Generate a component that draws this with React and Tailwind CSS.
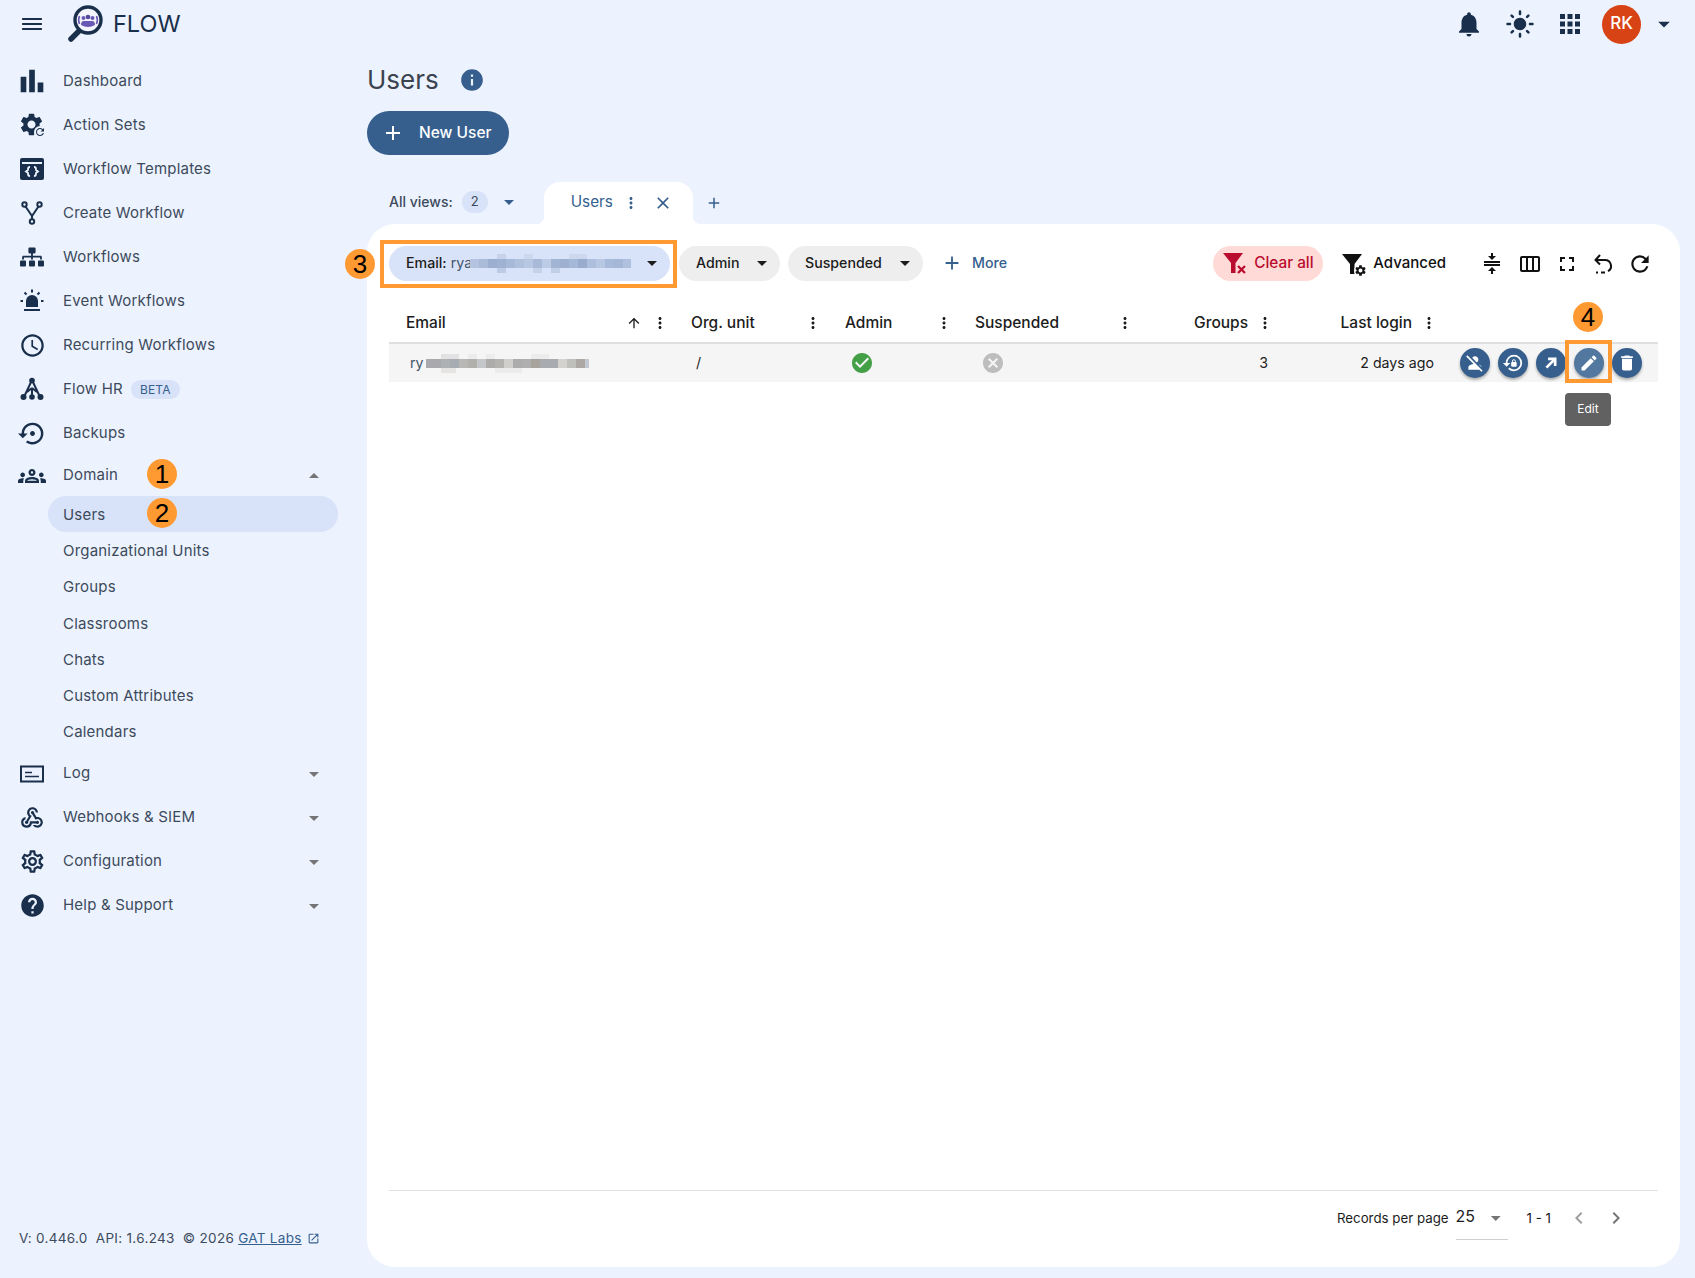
import React from 'react';
import {
  MdMenu, MdBarChart, MdSettings, MdRefresh, MdAccessTime, MdSettingsBackupRestore, MdOutlineGroups, MdWebhook,
  MdOutlineSettings, MdHelp, MdNotifications, MdLightMode, MdApps, MdInfo, MdAdd, MdMoreVert, MdClose,
  MdArrowDropDown, MdArrowDropUp, MdArrowUpward, MdCheckCircle, MdCancel, MdPersonOff, MdLockReset,
  MdEdit, MdDelete, MdCompress, MdOutlineViewWeek, MdFullscreen,
  MdChevronLeft, MdChevronRight, MdOpenInNew,
} from 'react-icons/md';
import { FaSitemap } from 'react-icons/fa';

const Logo = () => (
  <svg viewBox="0 0 36 38" className="w-[36px] h-[38px]">
    <path d="M13 25 L4 34" stroke="#1a2f4b" strokeWidth="5.5" strokeLinecap="round" />
    <circle cx="21" cy="15" r="13" fill="#f4f4fb" stroke="#1a2f4b" strokeWidth="3.4" />
    <path d="M12.5 11 A10 10 0 0 0 12.5 19 M29.500 11 A10 10 0 0 1 29.500 19" fill="none" stroke="#6a58b5" strokeWidth="1.6" />
    <circle cx="16.500" cy="13" r="2" fill="#6a58b5" />
    <circle cx="25.500" cy="13" r="2" fill="#6a58b5" />
    <circle cx="21" cy="12" r="2.300" fill="#5246a0" />
    <path d="M14 20 q0-4 3-4 h8 q3 0 3 4 q-7 4-14 0z" fill="#6a58b5" />
  </svg>
);

const ActionSetsIcon = () => (
  <div className="relative w-6 h-6">
    <MdSettings className="w-[27px] h-[27px] -ml-0.5 -mt-0.5 text-[#1a2f4b]" />
    <div className="absolute right-[-2px] bottom-[-1px] w-3 h-3 rounded-full bg-[#ecf3fe] flex items-center justify-center">
      <MdRefresh className="w-3 h-3 text-[#1a2f4b]" />
    </div>
  </div>
);

const TemplatesIcon = () => (
  <svg viewBox="0 0 24 24" className="w-6 h-6">
    <rect x="0" y="1" width="24" height="22" rx="2" fill="#1a2f4b" />
    <rect x="2" y="5" width="20" height="2" fill="#ecf3fe" />
    <path d="M10 10 q-2 0-2 2 v1 l-2 1.500 2 1.500 v1 q0 2 2 2 M14 10 q2 0 2 2 v1 l2 1.500 -2 1.500 v1 q0 2-2 2" fill="none" stroke="#ecf3fe" strokeWidth="1.800" />
  </svg>
);

const ForkIcon = () => (
  <svg viewBox="0 0 24 24" className="w-6 h-6" fill="none" stroke="#1a2f4b" strokeWidth="2">
    <circle cx="4.500" cy="3.500" r="2.200" />
    <circle cx="19.500" cy="3.500" r="2.200" />
    <circle cx="12" cy="20.500" r="2.200" />
    <path d="M5.500 5.500 L12 15 L18.500 5.500 M12 15 V18.300" />
  </svg>
);

const SirenIcon = () => (
  <svg viewBox="0 0 24 24" className="w-6 h-6">
    <path d="M6 18 V12 a6 6 0 0 1 12 0 V18z" fill="#1a2f4b" />
    <rect x="4" y="20" width="16" height="2" fill="#1a2f4b" />
    <path d="M12 0.500 V3.500 M4.500 3.500 L6.500 5.500 M19.500 3.500 L17.500 5.500 M0.500 12 H3 M21 12 H23.500" stroke="#1a2f4b" strokeWidth="2" />
  </svg>
);

const FlowHrIcon = () => (
  <svg viewBox="0 0 24 24" className="w-6 h-6">
    <path d="M12 3 L4 20 M12 3 L20 20 M12 11 L12 20 M12 11 L7 15 M12 11 L17 15" fill="none" stroke="#1a2f4b" strokeWidth="2" />
    <circle cx="12" cy="3.500" r="2.800" fill="#1a2f4b" />
    <circle cx="3.500" cy="20" r="3" fill="#1a2f4b" />
    <circle cx="20.500" cy="20" r="3" fill="#1a2f4b" />
    <circle cx="12" cy="20" r="2.800" fill="#1a2f4b" />
  </svg>
);

const LogIcon = () => (
  <svg viewBox="0 0 24 24" className="w-6 h-6">
    <rect x="1" y="4.500" width="22" height="15" fill="none" stroke="#1a2f4b" strokeWidth="2" />
    <path d="M5 10.500 H12 M5 14.500 H19" stroke="#1a2f4b" strokeWidth="1.600" />
  </svg>
);

const ResetIcon = () => (
  <svg viewBox="0 0 24 24" className="w-6 h-6" fill="none" stroke="#111" strokeWidth="2">
    <path d="M9 3 L4.500 8 L9 12.500" />
    <path d="M4.500 8 H14 a6 6 0 0 1 3 11.200" />
    <path d="M14 20.500 H10 M7 20.500 H5" />
  </svg>
);

const OutwardIcon = () => (
  <svg viewBox="0 0 24 24" className="w-5 h-5" fill="none" stroke="#fff" strokeWidth="3.200">
    <path d="M6.500 17.500 L16 8" />
    <path d="M8.500 7 H17 V15.500" />
  </svg>
);

const ClearFilterIcon = () => (
  <svg viewBox="0 0 26 24" className="w-[26px] h-6">
    <path d="M1 2 H21 L13.500 12 V22 H9 V12z" fill="#ba0c2f" />
    <path d="M16 15 L23 22 M23 15 L16 22" stroke="#ba0c2f" strokeWidth="2.300" />
  </svg>
);

const AdvancedFilterIcon = () => (
  <div className="relative w-[26px] h-6">
    <svg viewBox="0 0 26 24" className="w-[26px] h-6">
      <path d="M1 2 H21 L13.500 12 V22 H9 V12z" fill="#111" />
    </svg>
    <MdSettings className="absolute right-0 bottom-[-1px] w-[13px] h-[13px] text-[#111] bg-white rounded-full" />
  </div>
);

const chipBlur = [
  [0, 5, 9, '#b4c4e0'], [9, 5, 9, '#a9bbd9'], [18, 5, 9, '#9dafd0'], [27, 5, 9, '#9fb2d2'], [36, 5, 9, '#a6b9d9'], [45, 5, 9, '#b0c1de'],
  [54, 5, 9, '#b8c8e3'], [63, 5, 9, '#a8bad8'], [72, 5, 9, '#bccbe6'], [81, 5, 9, '#a2b4d3'], [90, 5, 9, '#9eafcf'], [99, 5, 9, '#a5b8d8'],
  [108, 5, 9, '#9aacce'], [117, 5, 9, '#adbfdc'], [126, 5, 9, '#b8c8e3'], [135, 5, 9, '#a8bad9'], [144, 5, 9, '#a5b7d7'], [153, 5, 8, '#b0c1df'],
  [27, 0, 9, '#c5d2ea'], [54, 0, 9, '#ccd8ee'], [99, 0, 18, '#ccd8ee'], [27, 14, 9, '#bccbe6'], [63, 14, 9, '#c5d2ea'], [81, 14, 9, '#c0cee8'],
];

const rowBlur = [
  [0, 5, 15, '#a9a9ad'], [15, 5, 9, '#adb1b3'], [24, 5, 9, '#a6acb1'], [33, 5, 9, '#b8b7b5'], [42, 5, 9, '#b1b0ad'], [51, 5, 9, '#c4c6c9'],
  [60, 5, 9, '#aeacab'], [69, 5, 9, '#b4b3b0'], [78, 5, 9, '#d0cfcb'], [87, 5, 9, '#adacad'], [96, 5, 9, '#b0afb0'], [105, 5, 9, '#a9a39d'],
  [114, 5, 18, '#a8abaf'], [132, 5, 9, '#d3d2ce'], [141, 5, 9, '#bfbfbb'], [150, 5, 9, '#aea8a4'], [159, 5, 9, '#c2c8d2'],
  [15, 0, 18, '#e2e2e2'], [42, 0, 9, '#ececec'], [60, 0, 9, '#ececec'], [105, 0, 18, '#ececec'], [15, 14, 15, '#e6e4e2'], [69, 14, 27, '#ebebeb'],
];

const Mosaic = ({ blocks, className }) => (
  <svg viewBox="0 0 162 22" className={className}>
    {blocks.map(([x, y, w, fill]) => (
      <rect key={`${x}-${y}`} x={x} y={y} width={w} height={y === 5 ? 9 : 5} fill={fill} />
    ))}
  </svg>
);

const Badge = ({ n, className }) => (
  <div className={`absolute w-[30px] h-[30px] rounded-full bg-[#ff9a33] flex items-center justify-center font-['Liberation_Sans',sans-serif] text-[26px] leading-none text-black ${className}`}>
    {n}
  </div>
);

const NavItem = ({ icon, label, caret, children }) => (
  <div className="h-11 flex items-center pl-5 pr-[41px] text-[15px] tracking-[0.2px] text-[#3d4a5c]">
    <div className="w-6 h-6 flex items-center justify-center text-[#1a2f4b] shrink-0 [&>*]:shrink-0">{icon}</div>
    <span className="ml-[19px]">{label}</span>
    {children}
    {caret && <MdArrowDropDown className="w-6 h-6 ml-auto text-[#757575]" />}
  </div>
);

const topNav = [
  { icon: <MdBarChart className="w-[34px] h-[34px]" />, label: 'Dashboard' },
  { icon: <ActionSetsIcon />, label: 'Action Sets' },
  { icon: <TemplatesIcon />, label: 'Workflow Templates' },
  { icon: <ForkIcon />, label: 'Create Workflow' },
  { icon: <FaSitemap className="w-6 h-6" />, label: 'Workflows' },
  { icon: <SirenIcon />, label: 'Event Workflows' },
  { icon: <MdAccessTime className="w-[27px] h-[27px]" />, label: 'Recurring Workflows' },
];

const subNav = ['Organizational Units', 'Groups', 'Classrooms', 'Chats', 'Custom Attributes', 'Calendars'];

const bottomNav = [
  { icon: <LogIcon />, label: 'Log' },
  { icon: <MdWebhook className="w-[26px] h-[26px]" />, label: 'Webhooks & SIEM' },
  { icon: <MdOutlineSettings className="w-[27px] h-[27px]" />, label: 'Configuration' },
  { icon: <MdHelp className="w-[27px] h-[27px]" />, label: 'Help & Support' },
];

function Sidebar() {
  return (
    <aside className="w-[367px] shrink-0 flex flex-col pt-[11px] pb-8">
      {topNav.map((item) => <NavItem key={item.label} {...item} />)}
      <NavItem icon={<FlowHrIcon />} label="Flow HR">
        <span className="ml-2 h-[19px] px-[9px] rounded-full bg-[#d8e2f8] text-[#365f8e] text-[12px] leading-[19px]">BETA</span>
      </NavItem>
      <NavItem icon={<MdSettingsBackupRestore className="w-[29px] h-[29px]" />} label="Backups" />

      <div className="h-[41px] flex items-center pl-5 pr-[41px] text-[15px] tracking-[0.2px] text-[#3d4a5c]">
        <MdOutlineGroups className="w-[28px] h-[28px] -ml-0.5 -mr-0.5 text-[#1a2f4b] shrink-0" />
        <span className="ml-[19px]">Domain</span>
        <MdArrowDropUp className="w-6 h-6 ml-auto text-[#757575]" />
      </div>
      <div className="h-[36px] ml-12 w-[290px] rounded-full bg-[#d8e2f8] flex items-center pl-[15px] pt-[2px] text-[15px] tracking-[0.2px] text-[#3d4a5c]">Users</div>
      <div className="mt-[1.4px] mb-px">
        {subNav.map((label) => (
          <div key={label} className="h-[36.200px] ml-12 pl-[15px] flex items-center text-[15px] tracking-[0.2px] text-[#3d4a5c]">{label}</div>
        ))}
      </div>

      {bottomNav.map((item) => <NavItem key={item.label} {...item} caret />)}

      <div className="mt-auto pl-[19px] flex items-center text-[13.5px] leading-4 tracking-[0.3px] text-[#3d4a5c] whitespace-pre">
        <span>V: 0.446.0  API: 1.6.243  © 2026 </span>
        <span className="text-[#365f8e] underline">GAT Labs</span>
        <MdOpenInNew className="w-[13px] h-[13px] ml-[5px] text-[#365f8e]" />
      </div>
    </aside>
  );
}

const HeaderCell = ({ children, className }) => (
  <div className={`flex items-center pb-[2px] text-[15.5px] font-medium text-[#1c1c1c] ${className}`}>
    {children}
  </div>
);

const Dots = ({ className = '' }) => <MdMoreVert className={`w-[18px] h-[18px] shrink-0 text-[#1c1c1c] ${className}`} />;

const ActionBtn = ({ icon, light }) => (
  <div className={`w-[30px] h-[30px] rounded-full flex items-center justify-center text-white shadow-[0_2px_3px_rgba(0,0,0,0.3)] ${light ? 'bg-[#53789f]' : 'bg-[#365f8e]'}`}>
    {icon}
  </div>
);

const Chip = ({ label, className }) => (
  <div className={`h-[35px] rounded-full bg-[#eeeeee] flex items-center justify-between pl-[17px] pr-[6px] pb-px text-[14.2px] font-medium text-[#1c1c1c] ${className}`}>
    <span>{label}</span>
    <MdArrowDropDown className="w-6 h-6" />
  </div>
);

function Panel() {
  return (
    <div className="flex-1 min-h-0 rounded-[28px] bg-white px-[22px] flex flex-col">
      {/* filters */}
      <div className="mt-[22px] flex items-center">
        <div className="relative w-[281px] h-[35px] rounded-full bg-[#d8e2f8] flex items-center pl-[17px] pb-px text-[14.2px] text-[#1c1c1c]">
          <span className="font-medium">Email:</span>
          <span className="ml-1 text-[#44546a]">rya</span>
          <Mosaic blocks={chipBlur} className="absolute left-[81px] top-[8px] w-[162px] h-[22px]" />
          <MdArrowDropDown className="absolute right-[6px] w-6 h-6" />
        </div>
        <Chip label="Admin" className="ml-[9px] w-[101px]" />
        <Chip label="Suspended" className="ml-2 w-[135px]" />
        <div className="ml-[18px] pb-px flex items-center text-[14.2px] font-medium text-[#365f8e]">
          <MdAdd className="w-[22px] h-[22px]" />
          <span className="ml-[9px]">More</span>
        </div>
        <div className="ml-auto w-[110px] h-[35px] rounded-full bg-[#ffdad6] flex items-center pl-[9px] pb-px text-[15.3px] font-medium text-[#ba0c2f]">
          <ClearFilterIcon />
          <span className="ml-[6px]">Clear all</span>
        </div>
        <div className="ml-[18px] flex items-center text-[15px] font-medium text-[#111]">
          <AdvancedFilterIcon />
          <span className="ml-[6px]">Advanced</span>
        </div>
        <div className="ml-[34px] mr-[5px] flex items-center text-[#111]">
          <MdCompress className="w-6 h-6" />
          <MdOutlineViewWeek className="ml-[14px] w-6 h-6" />
          <MdFullscreen className="ml-[13px] w-6 h-6" />
          <span className="ml-3"><ResetIcon /></span>
          <MdRefresh className="ml-3 w-[26px] h-[26px]" />
        </div>
      </div>

      {/* table */}
      <div className="mt-6 grid grid-cols-[285px_155px_130px_181px_140px_164px_214px]">
        <div className="col-span-7 grid grid-cols-subgrid h-[39px] border-b-2 border-[#e0e0e0]">
          <HeaderCell className="pl-[17px] pr-[5px]">
            Email
            <MdArrowUpward className="w-4 h-4 ml-auto mr-[9px]" />
            <Dots />
          </HeaderCell>
          <HeaderCell className="pl-[17px] pr-[7px] justify-between">Org. unit<Dots /></HeaderCell>
          <HeaderCell className="pl-4 pr-[6px] justify-between">Admin<Dots /></HeaderCell>
          <HeaderCell className="pl-4 pr-[6px] justify-between">Suspended<Dots /></HeaderCell>
          <HeaderCell className="pr-[6px] justify-end">Groups<Dots className="ml-2" /></HeaderCell>
          <HeaderCell className="pr-[6px] justify-end">Last login<Dots className="ml-2" /></HeaderCell>
          <div />
        </div>
        <div className="col-span-7 grid grid-cols-subgrid h-[38px] bg-[#f5f5f5] items-center pb-px text-[14.2px] text-[#1c1c1c]">
          <div className="relative pl-[21px] text-[#44546a]">
            ry
            <Mosaic blocks={rowBlur} className="absolute left-9 top-[2px] w-[164px] h-[22px]" />
          </div>
          <div className="pl-[22px]">/</div>
          <MdCheckCircle className="ml-[21px] mt-px w-6 h-6 text-[#43a047]" />
          <MdCancel className="ml-[22px] mt-px w-6 h-6 text-[#bdbdbd]" />
          <div className="text-right pr-[12px]">3</div>
          <div className="text-right pr-[10px]">2 days ago</div>
          <div className="pl-4 mt-px flex items-center gap-2">
            <ActionBtn icon={<MdPersonOff className="w-5 h-5" />} />
            <ActionBtn icon={<MdLockReset className="w-[22px] h-[22px]" />} />
            <ActionBtn icon={<OutwardIcon />} />
            <ActionBtn light icon={<MdEdit className="w-5 h-5" />} />
            <ActionBtn icon={<MdDelete className="w-5 h-5" />} />
          </div>
        </div>
      </div>

      {/* pagination */}
      <div className="mt-auto h-[77px] border-t border-[#e0e0e0] flex justify-end pr-[30px] pt-[15px] text-[#1c1c1c]">
        <div className="flex items-start h-[34px]">
          <span className="text-[13.3px] leading-[24px]">Records per page</span>
          <div className="ml-[7px] w-[52px] h-[34px] border-b border-[#cfcfcf] flex items-start text-[16px] leading-[20px]">
            <span>25</span>
            <MdArrowDropDown className="ml-[9px] w-6 h-6 text-[#757575]" />
          </div>
          <span className="ml-[19px] text-[13.3px] leading-[24px]">1 - 1</span>
          <MdChevronLeft className="ml-4 w-6 h-6 text-[#9e9e9e]" />
          <MdChevronRight className="ml-[13px] w-6 h-6 text-[#757575]" />
        </div>
      </div>
    </div>
  );
}

export default function App() {
  return (
    <div className="relative h-[1278px] bg-[#ecf3fe] flex flex-col overflow-hidden font-['Inter',sans-serif]">
      {/* top bar */}
      <header className="h-12 shrink-0 flex items-center pl-5 pr-[20px]">
        <MdMenu className="w-6 h-6 text-[#1a2f4b] scale-x-110" />
        <div className="ml-[23px]"><Logo /></div>
        <span className="ml-[10px] text-[23.5px] text-[#1a2f4b]">FLOW</span>
        <div className="ml-auto flex items-center text-[#1a2f4b]">
          <MdNotifications className="w-[30px] h-[30px]" />
          <MdLightMode className="ml-[21px] w-[30px] h-[30px]" />
          <MdApps className="ml-5 w-[30px] h-[30px]" />
          <div className="ml-[17px] w-[39px] h-[39px] rounded-full bg-[#d84315] flex items-center justify-center text-white text-[17px] font-medium">RK</div>
          <MdArrowDropDown className="ml-[9px] -mr-[3px] w-7 h-7" />
        </div>
      </header>

      <div className="flex flex-1 min-h-0">
        <Sidebar />
        <main className="flex-1 min-w-0 flex flex-col pr-[15px] pb-[11px]">
          <div className="pt-4 flex items-center">
            <h1 className="text-[26px] leading-8 text-[#3c4350]">Users</h1>
            <MdInfo className="ml-[20px] w-[26px] h-[26px] text-[#365f8e]" />
          </div>
          <button className="mt-[15px] w-[142px] h-11 rounded-full bg-[#365f8e] text-white flex items-center pl-[14px] text-[15.5px] font-medium">
            <MdAdd className="w-6 h-6" />
            <span className="ml-[14px]">New User</span>
          </button>

          {/* view tabs */}
          <div className="mt-[27px] h-[42px] shrink-0 flex items-center">
            <div className="pb-[3px] flex items-center">
              <span className="ml-[22px] text-[14px] font-medium text-[#3d4a5c]">All views:</span>
              <span className="ml-[9px] w-[26px] h-[22px] rounded-full bg-[#d8e2f8] flex items-center justify-center text-[13px] text-[#3d4a5c]">2</span>
              <MdArrowDropDown className="ml-[9px] w-6 h-6 text-[#365f8e]" />
            </div>
            <div className="relative ml-[23px] w-[149px] h-[42px] rounded-t-[16px] bg-white flex items-center pl-[27px] pb-px text-[15.3px] text-[#365f8e]">
              <span className="absolute left-[-8px] bottom-0 w-2 h-2 bg-[radial-gradient(circle_at_0_0,transparent_8px,white_8.5px)]" />
              <span className="absolute right-[-8px] bottom-0 w-2 h-2 bg-[radial-gradient(circle_at_100%_0,transparent_8px,white_8.5px)]" />
              <span>Users</span>
              <MdMoreVert className="ml-[9px] w-[18px] h-[18px]" />
              <MdClose className="ml-[13px] w-5 h-5" />
            </div>
            <MdAdd className="ml-[12px] w-[18px] h-[18px] text-[#365f8e]" />
          </div>
          <Panel />
        </main>
      </div>

      {/* tutorial annotations */}
      <div className="absolute left-[380px] top-[240px] w-[297px] h-[48px] border-4 border-[#ff9a33]" />
      <div className="absolute left-[1565px] top-[340px] w-[47px] h-[43px] border-4 border-[#ff9a33]" />
      <div className="absolute left-[1565px] top-[393px] w-[46px] h-[33px] rounded bg-[#616161] flex items-center justify-center pb-px text-[12px] text-white">Edit</div>
      <Badge n="1" className="left-[147px] top-[459px]" />
      <Badge n="2" className="left-[147px] top-[498px]" />
      <Badge n="3" className="left-[345px] top-[249px]" />
      <Badge n="4" className="left-[1573px] top-[302px]" />
    </div>
  );
}
